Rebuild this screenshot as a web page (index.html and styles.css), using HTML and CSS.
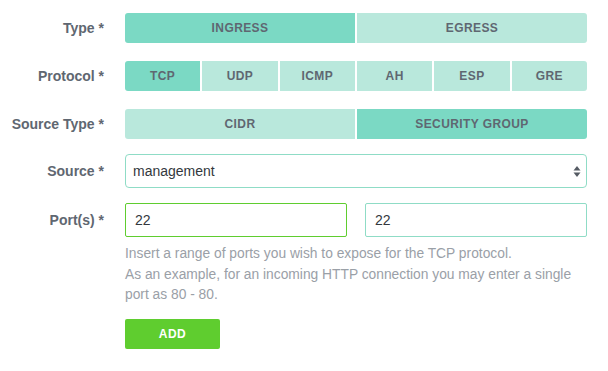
FILE: index.html
```html
<!DOCTYPE html>
<html lang="en">
<head>
    <meta charset="UTF-8">
    <meta name="viewport" content="width=device-width, initial-scale=1.0">
    <title>Add Rule</title>
    <link rel="stylesheet" href="styles.css">
</head>
<body>
    <form class="regra-form" onsubmit="return false;">
        <div class="linha">
            <label class="rotulo">Type *</label>
            <div class="segmentos">
                <button type="button" class="seg ativo">INGRESS</button>
                <button type="button" class="seg">EGRESS</button>
            </div>
        </div>

        <div class="linha">
            <label class="rotulo">Protocol *</label>
            <div class="segmentos">
                <button type="button" class="seg ativo">TCP</button>
                <button type="button" class="seg">UDP</button>
                <button type="button" class="seg">ICMP</button>
                <button type="button" class="seg">AH</button>
                <button type="button" class="seg">ESP</button>
                <button type="button" class="seg">GRE</button>
            </div>
        </div>

        <div class="linha linha-campo">
            <label class="rotulo">Source Type *</label>
            <div class="segmentos">
                <button type="button" class="seg">CIDR</button>
                <button type="button" class="seg ativo">SECURITY GROUP</button>
            </div>
        </div>

        <div class="linha linha-campo">
            <label class="rotulo">Source *</label>
            <div class="seletor">
                <span>management</span>
                <svg width="8" height="13" viewBox="0 0 8 13">
                    <path d="M4 1 L7.5 5.5 L0.5 5.5 Z" fill="#555b63"/>
                    <path d="M4 12 L7.5 7.5 L0.5 7.5 Z" fill="#555b63"/>
                </svg>
            </div>
        </div>

        <div class="linha linha-campo">
            <label class="rotulo">Port(s) *</label>
            <div class="portas">
                <input type="text" class="campo campo-foco" value="22">
                <input type="text" class="campo" value="22">
            </div>
        </div>

        <div class="linha">
            <span></span>
            <div>
                <p class="ajuda">Insert a range of ports you wish to expose for the TCP protocol.<br>
                As an example, for an incoming HTTP connection you may enter a single<br>
                port as 80 - 80.</p>
                <button type="button" class="btn-add">ADD</button>
            </div>
        </div>
    </form>
</body>
</html>
```

FILE: styles.css
```css
:root {
    --cor-ativo: #7bd9c4;
    --cor-inativo: #b9e8dc;
    --cor-texto: #5f6771;
    --cor-ajuda: #9aa0a7;
    --cor-borda: #8fdcc6;
    --cor-verde: #5fcd2f;
}
* { box-sizing: border-box; margin: 0; padding: 0; }
body {
    font-family: "Liberation Sans", Arial, sans-serif;
    background: #fff;
    color: var(--cor-texto);
    padding-top: 13px;
}
.regra-form { width: 587px; }
.linha {
    display: grid; grid-template-columns: 104px 1fr; column-gap: 21px;
    align-items: center; margin-bottom: 18px;
}
.linha-campo { margin-bottom: 15px; }
.rotulo {
    text-align: right; font-weight: bold; font-size: 14px; color: var(--cor-texto);
}
.segmentos { display: flex; gap: 2px; height: 30px; }
.seg {
    flex: 1; border: none; background-color: var(--cor-inativo); color: var(--cor-texto);
    font-family: inherit; font-weight: bold; font-size: 12px; letter-spacing: 0.4px;
}
.seg:first-child { border-radius: 3px 0 0 3px; }
.seg:last-child { border-radius: 0 3px 3px 0; }
.seg.ativo { background-color: var(--cor-ativo); }
.seletor {
    height: 34px; border: 1px solid var(--cor-borda); border-radius: 4px;
    display: flex; align-items: center; justify-content: space-between;
    padding: 0 5px 0 7px; font-size: 14px; color: #33383d;
}
.portas { display: flex; gap: 18px; }
.campo {
    flex: 1; min-width: 0; height: 34px; border: 1px solid var(--cor-borda); border-radius: 2px;
    padding: 0 9px; font-family: inherit; font-size: 14px; color: #33383d; outline: none;
}
.campo-foco { border-color: var(--cor-verde); }
.ajuda {
    margin-top: -8px; font-size: 13.8px; line-height: 20.5px;
    color: var(--cor-ajuda); white-space: nowrap;
}
.btn-add {
    margin-top: 13px; width: 95px; height: 30px; border: none; border-radius: 2px;
    background-color: var(--cor-verde); color: #fff; font-family: inherit;
    font-weight: bold; font-size: 12px; letter-spacing: 0.5px;
}
```
